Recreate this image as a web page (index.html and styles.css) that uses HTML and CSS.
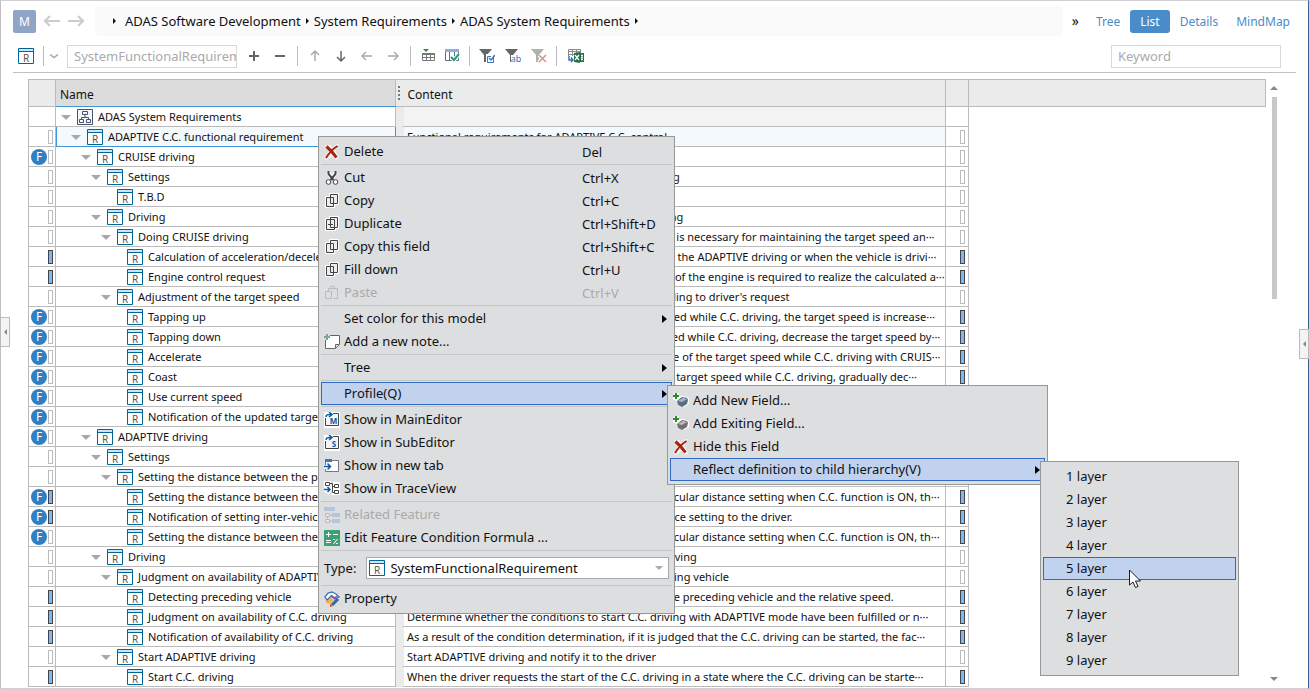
FILE: index.html
```
<!DOCTYPE html>
<html lang="en">
<head>
    <meta charset="UTF-8">
    <meta name="viewport" content="width=device-width, initial-scale=1.0">
    <title>ADAS System Requirements</title>
    <link rel="stylesheet" href="styles.css">
</head>
<body>

<svg class="sprite" aria-hidden="true">
    <symbol id="i-req" viewBox="0 0 16 16">
        <path fill="#fff" stroke="#006699" d="M.5.5h15v15H.5z"/>
        <path fill="#cde6f5" d="M1 1h14v2H1z"/>
        <path fill="#006699" d="M1 3h14v1H1z"/>
        <text x="8" y="14" font-size="10" fill="#555" text-anchor="middle">R</text>
    </symbol>
    <symbol id="i-tree" viewBox="0 0 16 16">
        <path fill="#f4f6fa" stroke="#44546f" d="M.5.5h15v15H.5z"/>
        <path fill="none" stroke="#44546f" d="M5.500 2.500h5v3h-5zM2.500 10.500h4v3h-4zM9.500 10.500h4v3h-4zM8 6v2M4.500 10V8.500h7V10"/>
    </symbol>
    <symbol id="i-x" viewBox="0 0 16 16">
        <path fill="#fff" d="M1 1h5l2 3 5-4h2l-4 7 4 6-2 3-5-4-5 4-3-2 5-7z" opacity=".7"/>
        <path fill="none" stroke="#a8230c" stroke-width="2" d="M13.500 2Q7 6 2 14"/>
        <path fill="none" stroke="#a8230c" stroke-width="3" d="M2.500 2.500q5 4 10 11"/>
    </symbol>
    <symbol id="i-cut" viewBox="0 0 16 16">
        <path fill="none" stroke="#fff" stroke-width="4" d="M4 2l5 8M12 2L7 10"/>
        <path fill="none" stroke="#444" stroke-width="2" d="M4.500 1v3l5 6M11.500 1v3l-5 6"/>
        <circle cx="4.500" cy="12" r="2.300" fill="#fff" stroke="#444"/>
        <circle cx="11.500" cy="12" r="2.300" fill="#fff" stroke="#444"/>
    </symbol>
    <symbol id="i-copy" viewBox="0 0 16 16">
        <path fill="#f0f0f0" stroke="#fff" stroke-width="3" d="M6.500 1.500h7v9h-7zM2.500 4.500h7v9h-7z"/>
        <path fill="#eee" stroke="#444" d="M6.500 1.500h7v9h-7zM2.500 4.500h7v9h-7z"/>
    </symbol>
    <symbol id="i-dup" viewBox="0 0 16 16">
        <path fill="#f0f0f0" stroke="#fff" stroke-width="3" d="M6.500 1.500h7v10h-7zM2.500 3.500h8v10h-8z"/>
        <path fill="#eee" stroke="#444" d="M6.500 1.500h7v10h-7zM2.500 3.500h8v10h-8zM6.500 6v5M4 8.500h5"/>
    </symbol>
    <symbol id="i-paste" viewBox="0 0 16 16">
        <path fill="none" stroke="#bbb" d="M4.500 6V3.500h9v10h-4M1.500 6.500h6v7h-6zM6.500 3q0-2 2-2t2 2"/>
    </symbol>
    <symbol id="i-note" viewBox="0 0 16 16">
        <path fill="#fff" stroke="#666" d="M1.500 1.500h14v9l-4 4h-10z"/>
        <path fill="#ddd" stroke="#666" d="M11.500 14v-3.500H15"/>
        <path stroke="#dddee0" stroke-width="4" d="M2 0v6M0 2h6"/>
        <path stroke="#7aa892" stroke-width="2" d="M3 0v6M0 3h6"/>
    </symbol>
    <symbol id="i-main" viewBox="0 0 16 16">
        <path fill="#fff" d="M0 0h16v16H0z"/>
        <path fill="#f5f5f5" stroke="#444" d="M1.500 6v7.500h13V1.500H9"/>
        <path fill="none" stroke="#0a58a4" stroke-width="1.500" d="M2 5q0-3 5-2.500M5 0l3 2.500L5 5"/>
        <text x="9.500" y="12" font-size="8" font-weight="bold" fill="#0a58a4" text-anchor="middle">M</text>
    </symbol>
    <symbol id="i-sub" viewBox="0 0 16 16">
        <path fill="#fff" d="M0 0h16v16H0z"/>
        <path fill="#f5f5f5" stroke="#444" d="M1.500 6v7.500h13V1.500H9"/>
        <path fill="none" stroke="#0a58a4" stroke-width="1.500" d="M2 5q0-3 5-2.500M5 0l3 2.500L5 5"/>
        <text x="10" y="12" font-size="8" font-weight="bold" fill="#0a58a4" text-anchor="middle">S</text>
    </symbol>
    <symbol id="i-tab" viewBox="0 0 16 16">
        <path fill="#fff" stroke="#777" d="M1.500 2.500h13v11h-13z"/>
        <path fill="#3c78b8" d="M1 1h7v3H1z"/>
        <path fill="none" stroke="#fff" stroke-width="4" d="M0 9h7"/>
        <path fill="none" stroke="#0a58a4" stroke-width="1.500" d="M0 8.500h6M3.500 5.500l3 3-3 3"/>
    </symbol>
    <symbol id="i-trace" viewBox="0 0 16 16">
        <path fill="#fff" d="M0 0h7v5h2V1h7v13H8V9L5 13 0 11z"/>
        <path fill="none" stroke="#444" d="M1.500 1.500h4v3h-4zM10.500 3.500h4v3h-4zM10.500 9.500h4v3h-4zM5.500 2.500h3v9h2M8 5.500h2"/>
        <path fill="none" stroke="#0a58a4" stroke-width="1.500" d="M0 8.500h6M3.500 6L6 8.500 3.500 11"/>
    </symbol>
    <symbol id="i-rel" viewBox="0 0 16 16">
        <path fill="#b4c6d8" d="M0 0h11v4H0zM8 6h8v4H8zM8 12h8v4H8z"/>
        <path fill="#e4e5e7" stroke="#bbb" d="M1.500 6.500h4v3h-4zM1.500 12.500h4v3h-4zM3.500 9v3M6 8h2M6 14h2"/>
    </symbol>
    <symbol id="i-formula" viewBox="0 0 16 16">
        <path fill="#3ba074" d="M0 0h16v16H0z"/>
        <path stroke="#fff" d="M2 4.500h5M4.500 2v5M9 4.500h5M2 10.500h5M2 12.500h5M9.500 14l4-5M9 9.500h2M12 13.500h2"/>
    </symbol>
    <symbol id="i-prop" viewBox="0 0 16 16">
        <path fill="#f2b25c" d="M2 9l5-3 3 3-4 4-4-1z"/>
        <path fill="#fff" stroke="#3a74b4" stroke-width="1.300" d="M1 6l3-4 4-1 4 2 3 3-4 2-4-3-4 4z"/>
        <path stroke="#8657a5" stroke-width="1.500" fill="none" d="M7 4l4 3 2-2"/>
        <path stroke="#2a69ad" stroke-width="3" d="M14 8l-6 6"/>
        <path fill="#c1571c" d="M6 13l3 2-3 1z"/>
    </symbol>
    <symbol id="i-field" viewBox="0 0 16 16">
        <path fill="#fff" d="M1 0h5v3l4 0 6 2v6l-5 3-6-1-1-5-4-2z"/>
        <path fill="#5b6d84" d="M4 8l5-4 5 1 1 2-1 4-5 3-4-2z"/>
        <path fill="#a9b7c8" d="M5 8l5-3 4 1-5 3z"/>
        <path stroke="#2e8b2e" stroke-width="2" d="M3 0v6M0 3h6"/>
    </symbol>
    <symbol id="i-field2" viewBox="0 0 16 16">
        <path fill="#fff" d="M1 0h5v3l4 0 6 2v6l-5 3-6-1-1-5-4-2z"/>
        <path fill="#707070" d="M4 8l5-4 5 1 1 2-1 4-5 3-4-2z"/>
        <path fill="#bbb" d="M5 8l5-3 4 1-5 3z"/>
        <path stroke="#2e8b2e" stroke-width="2" d="M3 0v6M0 3h6"/>
    </symbol>
    <symbol id="i-arrow" viewBox="0 0 16 16">
        <path fill="none" stroke="currentColor" stroke-width="1.500" d="M3 8h10M7 4L3 8l4 4"/>
    </symbol>
</svg>

<div class="window">
    <header class="topbar">
        <button class="model-btn">M</button>
        <button class="nav-btn" aria-label="Back">
            <svg width="16" height="12" viewBox="0 0 16 12"><path d="M0 6h16M6 1L1 6l5 5"/></svg>
        </button>
        <button class="nav-btn" aria-label="Forward">
            <svg width="16" height="12" viewBox="0 0 16 12"><path d="M0 6h16M10 1l5 5-5 5"/></svg>
        </button>
        <nav class="breadcrumb">
            <i class="tri"></i>
            <a href="#">ADAS Software Development</a><i class="tri"></i>
            <a href="#">System Requirements</a><i class="tri"></i>
            <a href="#">ADAS System Requirements</a><i class="tri"></i>
        </nav>
        <button class="more">»</button>
        <nav class="views">
            <a href="#">Tree</a>
            <a href="#" class="active">List</a>
            <a href="#">Details</a>
            <a href="#">MindMap</a>
        </nav>
    </header>

    <div class="toolbar">
        <button class="tool" aria-label="Type"><svg class="icon"><use href="#i-req"/></svg></button>
        <span class="divider"></span>
        <button class="tool chevron" aria-label="Choose type">
            <svg width="8" height="5" viewBox="0 0 8 5"><path d="M0 .500l4 3 4-3" fill="none" stroke="#aaa" stroke-width="1.500"/></svg>
        </button>
        <input class="field" type="text" placeholder="SystemFunctionalRequirement" aria-label="Type name">
        <div class="tools">
            <button class="tool" aria-label="Add"><svg class="icon"><path stroke="#666" stroke-width="2" d="M3 8h10M8 3v10"/></svg></button>
            <button class="tool" aria-label="Remove"><svg class="icon"><path stroke="#666" stroke-width="2" d="M3 8h10"/></svg></button>
        </div>
        <span class="divider"></span>
        <div class="tools">
            <button class="tool dim up" aria-label="Move up"><svg class="icon"><use href="#i-arrow"/></svg></button>
            <button class="tool down" aria-label="Move down"><svg class="icon"><use href="#i-arrow"/></svg></button>
            <button class="tool dim" aria-label="Outdent"><svg class="icon"><use href="#i-arrow"/></svg></button>
            <button class="tool dim right" aria-label="Indent"><svg class="icon"><use href="#i-arrow"/></svg></button>
        </div>
        <span class="divider"></span>
        <div class="tools narrow">
            <button class="tool" aria-label="Insert row">
                <svg class="icon"><path fill="#2e8b2e" d="M3 1h6L6 4z"/><path fill="#777" d="M2 5h13v2H2z"/><path fill="#fff" stroke="#777" d="M2.500 6.500h12v6h-12zM2 9.500h13M6.500 6v7M10.500 6v7"/></svg>
            </button>
            <button class="tool" aria-label="Columns">
                <svg class="icon"><path fill="#fff" stroke="#5a6f86" d="M1.500 1.500h13v11h-13zM5.500 3v9M10.500 3v9"/><path fill="#8cb0da" d="M1 1h14v3H1z"/><path fill="none" stroke="#fff" stroke-width="4" d="M7 9l3 3 5-6"/><path fill="none" stroke="#1fa06a" stroke-width="2" d="M7 9l3 3 5-6"/></svg>
            </button>
        </div>
        <span class="divider"></span>
        <div class="tools">
            <button class="tool" aria-label="Filter by choice">
                <svg class="icon"><path fill="#666" d="M0 1h13L8 7v7H5V7z"/><path fill="#fff" d="M7 6h9v9H7z"/><path fill="none" stroke="#3a74b4" d="M14.500 9v5.500h-6v-6H12"/><path fill="none" stroke="#3a74b4" stroke-width="1.500" d="M10 10l2 2 4-5"/></svg>
            </button>
            <button class="tool" aria-label="Filter by text">
                <svg class="icon"><path fill="#666" d="M0 1h13L8 7v7H5V7z"/><path fill="#fff" d="M6 7h10v8H6z"/><text x="11" y="14" font-size="9" fill="#3a74b4" text-anchor="middle">ab</text></svg>
            </button>
            <button class="tool" aria-label="Clear filter">
                <svg class="icon"><path fill="#b0b0b0" d="M0 1h13L8 7v7H5V7z"/><path fill="none" stroke="#fff" stroke-width="4" d="M8 7l7 7M15 7l-7 7"/><path fill="none" stroke="#dc9484" stroke-width="1.500" d="M8 7l7 7M15 7l-7 7"/></svg>
            </button>
        </div>
        <span class="divider"></span>
        <div class="tools">
            <button class="tool" aria-label="Export to Excel">
                <svg class="icon excel"><path fill="#fff" stroke="#888" d="M.500 1.500h12v8H.500zM0 3.500h12M0 6.500h12M4.500 1v8M8.500 1v8"/><path fill="#fff" d="M0 8h8v7H0z"/><path fill="#217346" d="M6 5l6-1v11l-6-1zM12 5h4v9h-4z"/><path stroke="#fff" stroke-width="1.300" d="M7 7l4 5M11 7l-4 5M13 7.500h2M13 9.500h2M13 11.500h2"/><path fill="none" stroke="#3a74b4" stroke-width="1.500" d="M1 8v4h4M3 9.500l2 2.500-2 2"/></svg>
            </button>
        </div>
        <input class="field search" type="text" placeholder="Keyword" aria-label="Keyword">
    </div>

    <main class="sheet">
        <table class="grid">
            <colgroup>
                <col class="c-mark"><col class="c-name"><col class="c-split"><col class="c-content"><col class="c-state"><col>
            </colgroup>
            <thead>
                <tr>
                    <th></th><th class="name">Name</th><th class="split"><i class="grip"></i></th><th class="content">Content</th><th></th><th></th>
                </tr>
            </thead>
            <tbody id="rows"></tbody>
        </table>
        <div class="scroll">
            <i class="scroll-up"></i>
            <i class="thumb"></i>
            <i class="scroll-down"></i>
        </div>
    </main>

    <button class="handle left" aria-label="Open left pane"><i></i></button>
    <button class="handle right" aria-label="Open right pane"><i></i></button>
</div>

<div class="menu menu-main">
    <button class="item"><svg class="icon"><use href="#i-x"/></svg><span>Delete</span><kbd>Del</kbd></button>
    <hr>
    <button class="item"><svg class="icon"><use href="#i-cut"/></svg><span>Cut</span><kbd>Ctrl+X</kbd></button>
    <button class="item"><svg class="icon"><use href="#i-copy"/></svg><span>Copy</span><kbd>Ctrl+C</kbd></button>
    <button class="item"><svg class="icon"><use href="#i-dup"/></svg><span>Duplicate</span><kbd>Ctrl+Shift+D</kbd></button>
    <button class="item"><svg class="icon"><use href="#i-copy"/></svg><span>Copy this field</span><kbd>Ctrl+Shift+C</kbd></button>
    <button class="item"><svg class="icon"><use href="#i-copy"/></svg><span>Fill down</span><kbd>Ctrl+U</kbd></button>
    <button class="item" disabled><svg class="icon"><use href="#i-paste"/></svg><span>Paste</span><kbd>Ctrl+V</kbd></button>
    <hr>
    <button class="item sub"><svg class="icon"></svg><span>Set color for this model</span></button>
    <button class="item"><svg class="icon"><use href="#i-note"/></svg><span>Add a new note...</span></button>
    <hr>
    <button class="item sub"><svg class="icon"></svg><span>Tree</span></button>
    <hr>
    <button class="item sub open"><svg class="icon"></svg><span>Profile(Q)</span></button>
    <hr>
    <button class="item"><svg class="icon"><use href="#i-main"/></svg><span>Show in MainEditor</span></button>
    <button class="item"><svg class="icon"><use href="#i-sub"/></svg><span>Show in SubEditor</span></button>
    <button class="item"><svg class="icon"><use href="#i-tab"/></svg><span>Show in new tab</span></button>
    <button class="item"><svg class="icon"><use href="#i-trace"/></svg><span>Show in TraceView</span></button>
    <hr>
    <button class="item" disabled><svg class="icon"><use href="#i-rel"/></svg><span>Related Feature</span></button>
    <button class="item"><svg class="icon"><use href="#i-formula"/></svg><span>Edit Feature Condition Formula ...</span></button>
    <hr>
    <div class="type-row">
        <label for="type">Type:</label>
        <div class="select-box">
            <svg class="icon"><use href="#i-req"/></svg>
            <select id="type"><option>SystemFunctionalRequirement</option></select>
        </div>
    </div>
    <hr>
    <button class="item"><svg class="icon"><use href="#i-prop"/></svg><span>Property</span></button>
</div>

<div class="menu menu-profile">
    <button class="item"><svg class="icon"><use href="#i-field"/></svg><span>Add New Field...</span></button>
    <button class="item"><svg class="icon"><use href="#i-field2"/></svg><span>Add Exiting Field...</span></button>
    <button class="item"><svg class="icon"><use href="#i-x"/></svg><span>Hide this Field</span></button>
    <button class="item sub open"><svg class="icon"></svg><span>Reflect definition to child hierarchy(V)</span></button>
</div>

<div class="menu menu-layer">
    <button class="item"><svg class="icon"></svg><span>1 layer</span></button>
    <button class="item"><svg class="icon"></svg><span>2 layer</span></button>
    <button class="item"><svg class="icon"></svg><span>3 layer</span></button>
    <button class="item"><svg class="icon"></svg><span>4 layer</span></button>
    <button class="item open"><svg class="icon"></svg><span>5 layer</span></button>
    <button class="item"><svg class="icon"></svg><span>6 layer</span></button>
    <button class="item"><svg class="icon"></svg><span>7 layer</span></button>
    <button class="item"><svg class="icon"></svg><span>8 layer</span></button>
    <button class="item"><svg class="icon"></svg><span>9 layer</span></button>
</div>

<svg class="cursor" width="13" height="20" viewBox="0 0 13 20">
    <path fill="#fff" stroke="#1a1a2e" d="M.500 1v15l3.500-3 2.500 5.500 2.500-1-2.500-5.500h5z"/>
</svg>

<script>
    // level, has children, name, content, feature badge, left mark, right mark (0 none, 1 empty, 2 filled)
    const rows = [
        [0, 1, "ADAS System Requirements", "", 0, 0, 0],
        [1, 1, "ADAPTIVE C.C. functional requirement", "Functional requirements for ADAPTIVE C.C. control", 0, 1, 1],
        [2, 1, "CRUISE driving", "", 1, 1, 1],
        [3, 1, "Settings", "Settings required for the operation of CRUISE driving", 0, 1, 1],
        [4, 0, "T.B.D", "", 0, 1, 1],
        [3, 1, "Driving", "Functions required while the vehicle is CRUISE driving", 0, 1, 1],
        [4, 1, "Doing CRUISE driving", "Calculate and control the vehicle acceleration which is necessary for maintaining the target speed an···", 0, 1, 1],
        [5, 0, "Calculation of acceleration/deceleration", "Calculate the necessary acceleration/deceleration in the ADAPTIVE driving or when the vehicle is drivi···", 0, 2, 2],
        [5, 0, "Engine control request", "Request the engine control when additional control of the engine is required to realize the calculated a···", 0, 2, 2],
        [4, 1, "Adjustment of the target speed", "Adjust the target speed of the driving vehicle according to driver's request", 0, 1, 1],
        [5, 0, "Tapping up", "When it is detected that the speed-up switch is tapped while C.C. driving, the target speed is increase···", 1, 1, 2],
        [5, 0, "Tapping down", "When detecting that the speed-down switch is tapped while C.C. driving, decrease the target speed by···", 1, 1, 2],
        [5, 0, "Accelerate", "When the switch is held, gradually increase the value of the target speed while C.C. driving with CRUIS···", 1, 1, 2],
        [5, 0, "Coast", "When the driver uses the coast key for reducing the target speed while C.C. driving, gradually dec···", 1, 1, 2],
        [5, 0, "Use current speed", "Use the current speed as the target speed", 1, 1, 2],
        [5, 0, "Notification of the updated target speed", "Notify the driver of the updated speed", 1, 1, 2],
        [2, 1, "ADAPTIVE driving", "", 1, 1, 1],
        [3, 1, "Settings", "Settings required for ADAPTIVE driving", 0, 1, 1],
        [4, 1, "Setting the distance between the preceding car", "", 0, 1, 1],
        [5, 0, "Setting the distance between the vehicles", "Change the actual inter-vehicle distance to the particular distance setting when C.C. function is ON, th···", 1, 2, 2],
        [5, 0, "Notification of setting inter-vehicle distance", "Notify the updated values of the inter-vehicle distance setting to the driver.", 1, 2, 2],
        [5, 0, "Setting the distance between the vehicles", "Change the actual inter-vehicle distance to the particular distance setting when C.C. function is ON, th···", 1, 1, 2],
        [3, 1, "Driving", "Functions required while the vehicle is ADAPTIVE driving", 0, 1, 1],
        [4, 1, "Judgment on availability of ADAPTIVE driving", "Judge the availability of C.C. driving after the preceding vehicle", 0, 1, 1],
        [5, 0, "Detecting preceding vehicle", "Detect the distance between the own vehicle and the preceding vehicle and the relative speed.", 0, 2, 2],
        [5, 0, "Judgment on availability of C.C. driving", "Determine whether the conditions to start C.C. driving with ADAPTIVE mode have been fulfilled or n···", 0, 2, 2],
        [5, 0, "Notification of availability of C.C. driving", "As a result of the condition determination, if it is judged that the C.C. driving can be started, the fac···", 0, 2, 2],
        [4, 1, "Start ADAPTIVE driving", "Start ADAPTIVE driving and notify it to the driver", 0, 1, 1],
        [5, 0, "Start C.C. driving", "When the driver requests the start of the C.C. driving in a state where the C.C. driving can be starte···", 0, 2, 2]
    ];

    const mark = n => n ? `<i class="mark${n === 2 ? " filled" : ""}"></i>` : "";

    document.getElementById("rows").innerHTML = rows.map(([level, parent, name, content, feature, left, right], i) => `
        <tr class="${i === 0 ? "root" : i === 1 ? "selected" : ""}">
            <td><div class="marks">${feature ? '<b class="feature">F</b>' : ""}${mark(left)}</div></td>
            <td class="name"><div class="node" style="padding-left: ${5 + level * 10}px">
                <i class="twisty${parent ? "" : " leaf"}"></i>
                <svg class="icon"><use href="#${i === 0 ? "i-tree" : "i-req"}"/></svg>
                <span>${name}</span>
            </div></td>
            <td class="split"></td>
            <td class="content">${content}</td>
            <td><div class="marks state">${mark(right)}</div></td>
            <td class="rest"></td>
        </tr>`).join("");
</script>

</body>
</html>
```
FILE: styles.css
```
* {
    box-sizing: border-box;
}
body {
    margin: 0;
    height: 100vh;
    overflow: hidden;
    font-family: "Noto Sans", "Open Sans", sans-serif;
    font-size: 12px;
    color: #111;
    background: #fff;
}
button, input, select, kbd {
    font: inherit;
    color: inherit;
}
button {
    border: 0;
    padding: 0;
    background: none;
}
a {
    color: inherit;
    text-decoration: none;
}
.sprite {
    display: none;
}
.icon {
    width: 16px;
    height: 16px;
    flex: none;
    display: block;
}
.window {
    position: relative;
    display: flex;
    flex-direction: column;
    height: 100vh;
    border: 1px solid #d0d0d4;
    border-left-color: #c0c0c0;
    border-right-color: #3f6096;
}

/* top bar */
.topbar {
    display: flex;
    align-items: center;
    padding: 5px 18px 0 12px;
}
.model-btn {
    width: 23px;
    height: 23px;
    border-radius: 2px;
    background: #8fa4c6;
    color: #fff;
}
.nav-btn {
    width: 16px;
    height: 23px;
    margin-left: 8px;
}
.nav-btn svg {
    display: block;
    fill: none;
    stroke: #ccc;
    stroke-width: 2;
}
.breadcrumb {
    flex: 1;
    display: flex;
    align-items: center;
    gap: 5px;
    height: 30px;
    margin-left: 11px;
    padding-left: 18px;
    border-radius: 4px;
    background: #fafafa;
    font-size: 13px;
}
.tri {
    border: 3px solid transparent;
    border-left-color: #111;
    border-right: 0;
}
.tri:first-child {
    margin-right: 4px;
}
.more {
    width: 25px;
    font-size: 14px;
    line-height: 20px;
}
.views {
    display: flex;
    align-items: center;
    gap: 10px;
    color: #4a8cca;
}
.views a {
    line-height: 23px;
    padding-left: 8px;
}
.views a.active {
    padding: 0 10px;
    border-radius: 3px;
    background: #4a8cca;
    color: #fff;
}
.views a.active + a {
    padding-left: 0;
}

/* toolbar */
.toolbar {
    display: flex;
    align-items: center;
    height: 37px;
    margin: 0 12px;
    padding: 4px 15px 0 5px;
    border-bottom: 1px solid #c0c0c0;
}
.tool {
    color: #666;
}
.tool.dim {
    color: #aaa;
}
.tool.up {
    transform: rotate(90deg);
}
.tool.down {
    transform: rotate(-90deg);
}
.tool.right {
    transform: rotate(180deg);
}
.chevron {
    width: 19px;
    display: flex;
    justify-content: center;
}
.divider {
    width: 1px;
    height: 20px;
    margin-left: 9px;
    background: #b8bcc4;
}
.tools {
    display: flex;
    gap: 10px;
    margin-left: 9px;
}
.tools.narrow {
    gap: 8px;
}
.excel {
    margin-left: 2px;
}
.field {
    width: 170px;
    height: 23px;
    margin-left: 4px;
    padding: 0 0 0 6px;
    border: 1px solid #d8d8d8;
    font-size: 13px;
}
.field::placeholder {
    color: #aaa;
    opacity: 1;
}
.search {
    margin-left: auto;
}

/* sheet */
.sheet {
    flex: 1;
    display: flex;
    min-height: 0;
    padding: 6px 26px 0 27px;
    overflow: hidden;
}
.grid {
    flex: 1;
    width: 100%;
    align-self: flex-start;
    table-layout: fixed;
    border-collapse: collapse;
    font-size: 11px;
}
.c-mark {
    width: 27px;
}
.c-name {
    width: 340px;
}
.c-split {
    width: 8px;
}
.c-content {
    width: 542px;
}
.c-state {
    width: 23px;
}
.grid th {
    height: 27px;
    padding: 2px 4px 0;
    border: solid #bbb;
    border-width: 1px 0;
    background: #ebebeb;
    font-size: 12px;
    font-weight: normal;
    text-align: left;
}
.grid th:first-child, .grid th:nth-child(5), .grid th:last-child {
    border-width: 1px;
}
.grid th.name {
    background: #dcdcdc;
    border-right: 1px solid #bbb;
    border-bottom-color: #3c96d8;
}
.grid th.split {
    padding: 0;
}
.grip {
    display: block;
    width: 2px;
    height: 14px;
    margin-left: 2px;
    background: repeating-linear-gradient(#777 0 2px, transparent 2px 4px);
}
.grid td {
    height: 20px;
    padding: 0;
    border: 1px solid #bbb;
    line-height: 16px;
    white-space: nowrap;
    overflow: hidden;
}
.grid td.split {
    border-width: 0 0 0 1px;
    background: #ebebeb;
}
.grid td.content {
    padding-left: 3px;
    border-left-color: #ebebeb;
}
.grid td.rest {
    border: 0;
}
.root td.content {
    background: #f3f3f3;
}
.root td.name {
    border-top-color: #3c96d8;
}
.selected td.name, .selected td.content {
    background: #f3f9fd;
}
.grid .selected td.name {
    border: 1px solid #3c96d8;
    box-shadow: inset 1px 0 #3c96d8;
}
.marks {
    display: flex;
    align-items: center;
    justify-content: flex-end;
    gap: 1px;
    padding-right: 2px;
}
.marks.state {
    padding-right: 3px;
}
.mark {
    width: 5px;
    height: 14px;
    border: 1px solid #bbb;
    background: #fff;
}
.mark.filled {
    border-color: #444;
    background: #7db8fa;
}
.feature {
    width: 16px;
    height: 16px;
    border-radius: 50%;
    background: #2f80c3;
    color: #fff;
    font-weight: normal;
    font-size: 12px;
    text-align: center;
}
.node {
    display: flex;
    align-items: center;
}
.twisty {
    flex: none;
    margin: 2px 6px 0 0;
    border: 5px solid transparent;
    border-top-color: #a8a8a8;
    border-bottom: 0;
}
.twisty.leaf {
    visibility: hidden;
}
.node span {
    margin-left: 5px;
}
.scroll {
    display: flex;
    flex-direction: column;
    align-items: center;
    width: 16px;
    padding: 7px 0;
}
.scroll-up, .scroll-down {
    border: 4px solid transparent;
    border-bottom-color: #888;
    border-top: 0;
}
.scroll-down {
    margin-top: auto;
    border-top: 4px solid #888;
    border-bottom: 0;
}
.thumb {
    width: 5px;
    height: 34%;
    margin-top: 7px;
    background: #c8c8c8;
}
.handle {
    position: absolute;
    top: 316px;
    left: -1px;
    display: flex;
    align-items: center;
    justify-content: center;
    width: 10px;
    height: 30px;
    border: 1px solid #bbb;
    background: #f4f4f4;
}
.handle.right {
    top: 328px;
    left: auto;
    right: -1px;
}
.handle i {
    border: 3px solid transparent;
    border-right-color: #888;
    border-left: 0;
}

/* context menus */
.menu {
    position: absolute;
    padding: 3px 2px;
    border: 1px solid #979797;
    background: #dddee0;
    font-size: 13px;
}
.menu-main {
    left: 318px;
    top: 136px;
    width: 357px;
}
.menu-profile {
    left: 667px;
    top: 385px;
    width: 381px;
}
.menu-layer {
    left: 1040px;
    top: 461px;
    width: 199px;
}
.item {
    display: flex;
    align-items: center;
    width: 100%;
    height: 23px;
    padding: 0 4px 0 2px;
    border: 1px solid transparent;
    text-align: left;
}
.item span {
    flex: 1;
    margin-left: 4px;
    padding-bottom: 2px;
}
.item kbd {
    width: 85px;
}
.item:disabled {
    color: #aaa;
}
.item.open {
    border-color: #316ac5;
    background: #c1d2ee;
}
.item.sub::after {
    content: "";
    border: 4px solid transparent;
    border-left: 5px solid #000;
    border-right: 0;
}
.menu hr {
    height: 1px;
    margin: 1px 0;
    border: 0;
    background: #c5c6c8;
}
.type-row {
    display: flex;
    align-items: center;
    height: 32px;
    padding: 0 3px;
}
.select-box {
    position: relative;
    flex: 1;
    display: flex;
    align-items: center;
    height: 22px;
    margin-left: 10px;
    padding-left: 2px;
    border: 1px solid #aaa;
    background: #fff;
}
.select-box select {
    flex: 1;
    height: 20px;
    padding: 0 0 0 5px;
    border: 0;
    background: none;
    appearance: none;
}
.select-box::after {
    content: "";
    margin-right: 5px;
    border: 4px solid transparent;
    border-top-color: #aaa;
    border-bottom: 0;
}
.cursor {
    position: absolute;
    left: 1129px;
    top: 569px;
}
```
